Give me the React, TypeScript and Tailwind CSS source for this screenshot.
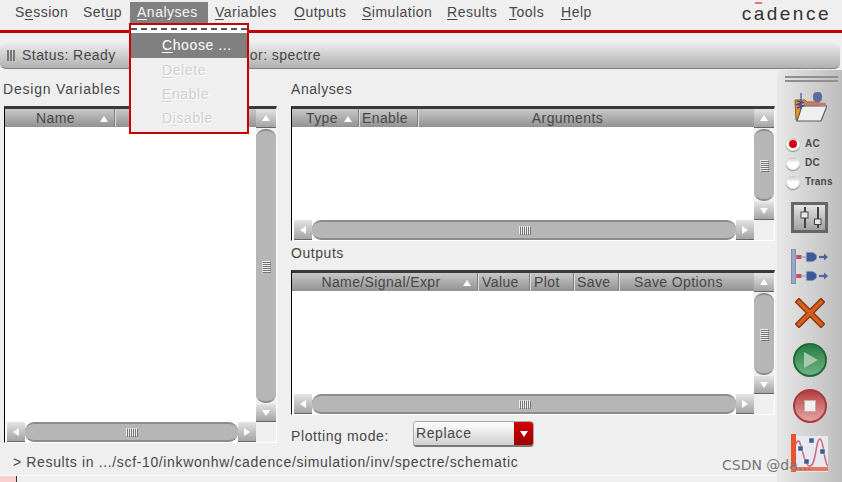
import React from 'react';

const font = "font-['Liberation_Sans',Arial,sans-serif]";

const menus: { before: string; key: string; after: string; w: number; active?: boolean }[] = [
  { before: 'S', key: 'e', after: 'ssion', w: 68 },
  { before: 'Set', key: 'u', after: 'p', w: 54 },
  { before: '', key: 'A', after: 'nalyses', w: 78, active: true },
  { before: '', key: 'V', after: 'ariables', w: 79 },
  { before: '', key: 'O', after: 'utputs', w: 68 },
  { before: '', key: 'S', after: 'imulation', w: 85 },
  { before: '', key: 'R', after: 'esults', w: 62 },
  { before: '', key: 'T', after: 'ools', w: 52 },
  { before: '', key: 'H', after: 'elp', w: 44 },
];

const Arrow = ({ dir, className = '' }: { dir: 'up' | 'down' | 'left' | 'right'; className?: string }) => {
  const pts = {
    up: '4,0 8,6 0,6',
    down: '0,0 8,0 4,6',
    left: '0,4 6,0 6,8',
    right: '0,0 6,4 0,8',
  }[dir];
  const box = dir === 'up' || dir === 'down' ? '0 0 8 6' : '0 0 6 8';
  const size = dir === 'up' || dir === 'down' ? 'w-[8px] h-[6px]' : 'w-[6px] h-[8px]';
  return (
    <svg viewBox={box} className={`${size} ${className}`}>
      <polygon points={pts} fill="#ffffff" />
    </svg>
  );
};

const ScrollBtn = ({ dir, className = '' }: { dir: 'up' | 'down' | 'left' | 'right'; className?: string }) => (
  <div className={`flex items-center justify-center bg-linear-to-b from-[#e4e4e4] to-[#a4a4a4] border-b border-[#666666] ${className}`}>
    <Arrow dir={dir} />
  </div>
);

const Grip = ({ vertical = false }: { vertical?: boolean }) => (
  <div className={`flex gap-[1px] ${vertical ? 'flex-col' : ''}`}>
    {[0, 1, 2, 3, 4, 5].map((i) => (
      <div key={i} className={`${vertical ? 'w-[8px] h-[1px]' : 'w-[1px] h-[8px]'} bg-[#ececec] shadow-[1px_1px_0_#777777]`} />
    ))}
  </div>
);

type Col = { label: string; width: number | string; sort?: boolean; textClass?: string };

const Table = ({ cols, height, width }: { cols: Col[]; height: number; width: number }) => (
  <div
    className="flex flex-col border-l border-t-[3px] border-l-black border-t-[#3a3a3a] border-r border-b border-r-white border-b-white bg-[#efefef]"
    style={{ height, width }}
  >
    <div className="flex flex-1 min-h-0">
      <div className="flex-1 flex flex-col bg-white">
        <div className="h-[18px] flex bg-linear-to-b from-[#c8c8c8] to-[#929292] text-[14px] tracking-[0.4px] text-[#474747] leading-[16px]">
          {cols.map((c) => (
            <div
              key={c.label + c.width}
              className={`relative flex items-center pb-[1px] border-r border-[#dcdcdc] shadow-[inset_-1px_0_0_#808080] last:border-r-0 last:shadow-none ${c.textClass ?? 'justify-center'}`}
              style={typeof c.width === 'number' ? { width: c.width } : { flex: 1 }}
            >
              <span>{c.label}</span>
              {c.sort && <Arrow dir="up" className="absolute right-[7px] top-[7px]" />}
            </div>
          ))}
        </div>
      </div>
      <div className="w-[20px] flex flex-col bg-[#efefef]">
        <ScrollBtn dir="up" className="h-[19px]" />
        <div className="flex-1 my-[1px] bg-[#b6b6b6] rounded-t-[9px] rounded-b-[9px] border-t-2 border-b-2 border-[#8c8c8c] flex items-center justify-center">
          <Grip vertical />
        </div>
        <ScrollBtn dir="down" className="h-[18px]" />
      </div>
    </div>
    <div className="flex h-[20px] bg-white">
      <ScrollBtn dir="left" className="w-[18px] ml-[2px]" />
      <div className="flex-1 bg-[#b6b6b6] rounded-[9px] border-t-2 border-b-2 border-[#8c8c8c] flex items-center justify-center">
        <Grip />
      </div>
      <ScrollBtn dir="right" className="w-[18px]" />
      <div className="w-[20px] bg-[#efefef]" />
    </div>
  </div>
);

const FolderIcon = () => (
  <svg viewBox="0 0 34 32" className="w-[34px] h-[32px]">
    <path d="M2 9h10l2 2h12v18H3z" fill="#e8912f" stroke="#9a5a14" strokeWidth="1" />
    <path d="M9 15h25l-6 15H4z" fill="#efefef" stroke="#5c5c5c" strokeWidth="1.2" />
    <path d="M8 2v16" stroke="#3d4f9c" strokeWidth="1.2" />
    <path d="M4 10l6 1.5-6 2 6 1.5-6 2" stroke="#3d4f9c" strokeWidth="1.4" fill="none" />
    <rect x="20" y="1" width="9" height="10" rx="4" fill="#5d6b9e" />
    <path d="M24.5 10v4" stroke="#b05a5a" strokeWidth="2" />
    <path d="M11 13h22" stroke="#c47a7a" strokeWidth="2.4" />
  </svg>
);

const Radio = ({ label, on }: { label: string; on?: boolean }) => (
  <div className="flex items-center h-[19px] text-[10px] font-bold text-[#4a4a4a] tracking-[0.2px]">
    <div className="w-[14px] h-[14px] rounded-full bg-linear-to-b from-[#c4c4c4] via-[#ffffff] to-[#ffffff] border border-[#e4e4e4] shadow-[0_1px_1px_#8a8a8a] flex items-center justify-center">
      {on && <div className="w-[8px] h-[8px] rounded-full bg-[#d40010]" />}
    </div>
    <span className="ml-[5px]">{label}</span>
  </div>
);

const SlidersIcon = () => (
  <div className="w-[37px] h-[31px] border-[3px] border-[#666666] bg-linear-to-b from-[#e4e4e4] to-[#a0a0a0] flex items-center justify-center">
    <svg viewBox="0 0 31 25" className="w-[31px] h-[25px]">
      <path d="M11 2v21M24 2v21" stroke="#444444" strokeWidth="2" />
      <rect x="7" y="7" width="7" height="6" fill="#e8e8e8" stroke="#444444" />
      <rect x="20.5" y="14" width="6.5" height="5.5" fill="#e8e8e8" stroke="#444444" />
    </svg>
  </div>
);

const ConnectIcon = () => (
  <svg viewBox="0 0 38 35" className="w-[38px] h-[35px]">
    <rect x="0.5" y="0" width="4" height="35" fill="#98a6c8" stroke="#5a6a9c" strokeWidth="0.6" />
    {[8, 27].map((y) => (
      <g key={y}>
        <rect x="4.5" y={y - 2} width="5" height="4" fill="#b89aa4" />
        <rect x="5.5" y={y - 2} width="5" height="4" fill="#cc4c5a" />
        <path d={`M15 ${y - 5}h7l4 3v4l-4 3h-7z`} fill="#3f5a94" stroke="#c0c8da" strokeWidth="1" />
        <path d={`M10 ${y}h5`} stroke="#98a6c8" strokeWidth="1.4" />
        <path d={`M28 ${y}h7`} stroke="#4a649c" strokeWidth="2.2" />
        <path d={`M33 ${y - 3.5}l4 3.5-4 3.5z`} fill="#4a649c" />
      </g>
    ))}
  </svg>
);

const CrossIcon = () => (
  <svg viewBox="0 0 30 30" className="w-[30px] h-[30px]">
    <path d="M4 4L26 26M26 4L4 26" stroke="#8a3a10" strokeWidth="6.5" strokeLinecap="square" />
    <path d="M4 4L26 26M26 4L4 26" stroke="#d65e1e" strokeWidth="3.6" strokeLinecap="square" />
  </svg>
);

const PlayIcon = () => (
  <div className="w-[34px] h-[34px] rounded-full border-2 border-[#1f6b38] bg-linear-to-b from-[#257d44] to-[#6fb384] flex items-center justify-center">
    <svg viewBox="0 0 14 16" className="w-[14px] h-[16px] ml-[2px]">
      <polygon points="0,0 14,8 0,16" fill="#a8c8ae" />
    </svg>
  </div>
);

const StopIcon = () => (
  <div className="w-[34px] h-[34px] rounded-full border-2 border-[#a83a40] bg-linear-to-b from-[#b43c42] to-[#e2a4a4] flex items-center justify-center">
    <div className="w-[12px] h-[12px] bg-[#f3eeee] border border-[#c0b0b0]" />
  </div>
);

const PlotIcon = () => (
  <svg viewBox="0 0 37 38" className="w-[37px] h-[38px]">
    <rect x="0" y="2" width="37" height="36" fill="#e6e9f2" />
    <rect x="0" y="0" width="5" height="38" fill="#e8532c" />
    <rect x="0" y="33" width="37" height="4" fill="#e8765a" />
    <path d="M5 10C10 -4 12 34 19 32 25 32 25 4 29 5 33 6 33 30 37 32" fill="none" stroke="#d66a74" strokeWidth="1.6" />
    <g fill="#44598c" stroke="#e6e9f2" strokeWidth="0.5">
      <rect x="7" y="12" width="5" height="5" />
      <rect x="18" y="4" width="5" height="5" />
      <rect x="13" y="25" width="5" height="5" />
      <rect x="29" y="15" width="5" height="5" />
    </g>
  </svg>
);

const Toolbar = () => (
  <div className="w-[65px] ml-[1px] mt-[1px] h-[412px] flex flex-col items-center rounded-tl-[6px] bg-linear-to-r from-[#e8e8e8] to-[#bdbdbd] overflow-hidden">
    <div className="mt-[6px] w-[53px] ml-[4px] h-[6px] border-y-2 border-[#8f8f8f]" />
    <div className="mt-[9px] ml-[1px]"><FolderIcon /></div>
    <div className="mt-[11px] self-start ml-[9px]">
      <Radio label="AC" on />
      <Radio label="DC" />
      <Radio label="Trans" />
    </div>
    <div className="mt-[11px]"><SlidersIcon /></div>
    <div className="mt-[16px]"><ConnectIcon /></div>
    <div className="mt-[14px]"><CrossIcon /></div>
    <div className="mt-[15px]"><PlayIcon /></div>
    <div className="mt-[12px]"><StopIcon /></div>
    <div className="mt-[11px]"><PlotIcon /></div>
  </div>
);

const MenuItem = ({ label, disabled, active }: { label: [string, string, string]; disabled?: boolean; active?: boolean }) => (
  <div
    className={`h-[24px] pl-[31px] leading-[24px] ${
      active ? 'h-[25px] leading-[25px] bg-[#808080] text-white' : ''
    } ${disabled ? "text-[#cfcfcf] [text-shadow:1px_1px_0_#ffffff]" : ''}`}
  >
    {label[0]}
    <u className="underline-offset-2">{label[1]}</u>
    {label[2]}
  </div>
);

export default function App() {
  return (
    <div className={`${font} relative w-[842px] h-[482px] overflow-hidden bg-[#efefef] text-[#474747] text-[14px]`}>
      {/* menu bar */}
      <div className="flex items-start h-[30px] pl-[7.5px] pt-[2px] tracking-[0.5px]">
        {menus.map((m) => (
          <div
            key={m.after}
            className={`h-[21px] px-[7.5px] leading-[21px] whitespace-nowrap ${m.active ? 'bg-[#808080] text-[#f4f4f4]' : ''}`}
            style={{ width: m.w }}
          >
            {m.before}
            <u className="underline-offset-2">{m.key}</u>
            {m.after}
          </div>
        ))}
        <div className="ml-auto mr-[11px] mt-[2px] text-[19px] tracking-[2.5px] leading-[20px] text-[#333333]">
          c<span className="relative">a<span className="absolute left-[1px] -top-[1px] w-[7px] h-[2px] bg-[#ee7070]" /></span>dence
        </div>
      </div>
      <div className="h-[3px] bg-[#c80000]" />

      {/* status bar */}
      <div className="mt-[10px] w-[840px] h-[26px] flex items-center rounded-[6px] border-b border-[#808080] bg-linear-to-b from-[#ececec] to-[#b0b0b0] pl-[7px] tracking-[0.45px]">
        <div className="flex gap-[1px]">
          <div className="w-[2px] h-[11px] bg-[#777777]" />
          <div className="w-[2px] h-[11px] bg-[#777777]" />
          <div className="w-[2px] h-[11px] bg-[#777777]" />
        </div>
        <span className="ml-[7px]">Status: Ready</span>
        <span className="ml-[134px]">or: spectre</span>
      </div>

      <div className="flex">
        <div className="w-[776px] flex flex-col">
          <div className="flex h-[383px]">
            {/* left panel */}
            <div className="w-[291px] pl-[3px] pt-[10px]">
              <div className="h-[27px] text-[14px] tracking-[0.8px] leading-[20px]">Design Variables</div>
              <div className="ml-[1px]">
                <Table cols={[{ label: 'Name', width: 111, sort: true, textClass: 'justify-center pr-[9px]' }, { label: '', width: 'auto' }]} height={337} width={273} />
              </div>
            </div>
            {/* right panel */}
            <div className="w-[484px] pt-[10px]">
              <div className="h-[27px] tracking-[0.55px] leading-[20px]">Analyses</div>
              <Table
                cols={[
                  { label: 'Type', width: 68, sort: true, textClass: 'justify-center pr-[7px]' },
                  { label: 'Enable', width: 59, textClass: 'pl-[2px]' },
                  { label: 'Arguments', width: 'auto', textClass: 'justify-center pr-[38px]' },
                ]}
                height={135}
                width={484}
              />
              <div className="h-[29px] pt-[2px] tracking-[0.55px] leading-[20px]">Outputs</div>
              <Table
                cols={[
                  { label: 'Name/Signal/Expr', width: 187, sort: true, textClass: 'justify-center pr-[8px]' },
                  { label: 'Value', width: 52, textClass: 'pl-[3px]' },
                  { label: 'Plot', width: 44, textClass: 'pl-[3px]' },
                  { label: 'Save', width: 45, textClass: 'pl-[2px]' },
                  { label: 'Save Options', width: 'auto', textClass: 'pl-[14px]' },
                ]}
                height={145}
                width={484}
              />
              <div className="flex items-center mt-[6px] h-[26px]">
                <span className="w-[122px] tracking-[0.6px] pt-[5px]">Plotting mode:</span>
                <div className="w-[121px] h-[26px] flex rounded-[4px] border border-[#aaaaaa] border-b-2 border-b-[#777777] overflow-hidden">
                  <div className="flex-1 bg-linear-to-b from-[#ffffff] to-[#cfcfcf] pl-[2px] leading-[22px] tracking-[0.6px]">Replace</div>
                  <div className="w-[19px] bg-linear-to-b from-[#d40000] to-[#a00000] flex items-center justify-center">
                    <Arrow dir="down" />
                  </div>
                </div>
              </div>
            </div>
          </div>
          {/* results line */}
          <div className="h-[24px] pl-[13px] leading-[20px] tracking-[0.64px] border-b border-white">
            &gt; Results in .../scf-10/inkwonhw/cadence/simulation/inv/spectre/schematic
          </div>
          <div className="flex h-[6px]">
            <div className="w-[16px] bg-[#f8d0d0]" />
            <div className="w-[1px] bg-[#333333]" />
          </div>
        </div>
        <Toolbar />
      </div>

      {/* Analyses pull-down */}
      <div className="absolute left-[129px] top-[23px] w-[120px] h-[111px] border-2 border-[#c80000] bg-[#efefef] tracking-[0.6px]">
        <div className="h-[8px] bg-white flex items-center">
          <div className="w-full border-t-2 border-dashed border-[#555555]" />
        </div>
        <MenuItem label={['', 'C', 'hoose ...']} active />
        <MenuItem label={['', 'D', 'elete']} disabled />
        <MenuItem label={['', 'E', 'nable']} disabled />
        <MenuItem label={['D', 'i', 'sable']} disabled />
      </div>

      {/* watermark */}
      <div className="absolute left-[722px] top-[455px] text-[14px] leading-[20px] text-[#777777] font-['DejaVu_Sans',sans-serif]">
        CSDN @da...
      </div>
    </div>
  );
}
